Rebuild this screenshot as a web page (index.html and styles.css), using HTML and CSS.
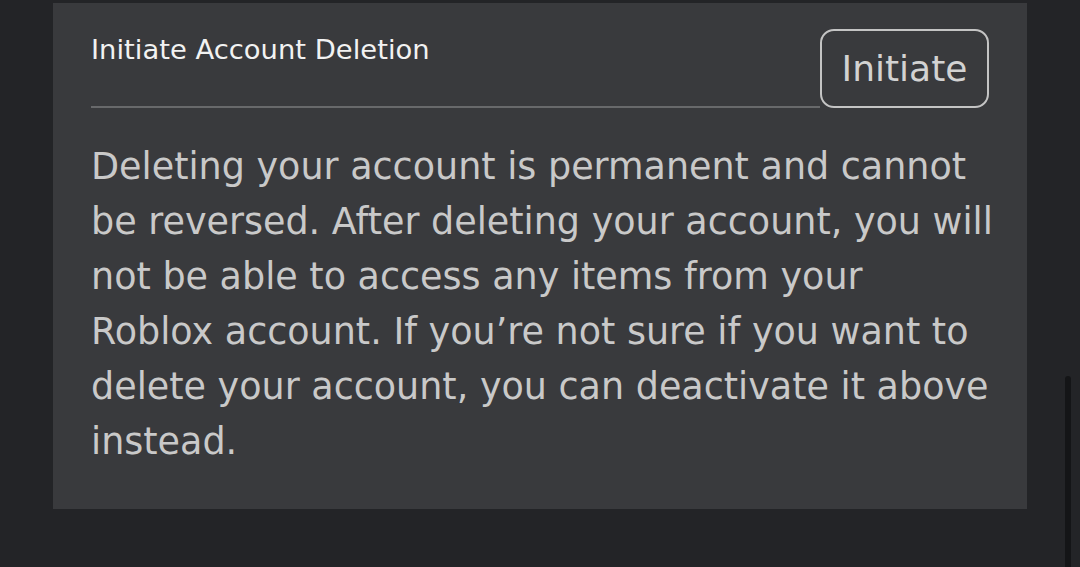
FILE: index.html
```html
<!DOCTYPE html>
<html lang="en">

<head>
    <meta charset="UTF-8">
    <meta name="viewport" content="width=device-width, initial-scale=1.0">
    <title>Account Settings</title>
    <link rel="stylesheet" href="styles.css">
</head>

<body>

    <div class="page">
        <section class="settings-panel">
            <div class="setting-row">
                <div class="setting-label">
                    <span>Initiate Account Deletion</span>
                </div>
                <button class="outline-btn" id="initiate">Initiate</button>
            </div>

            <p class="setting-desc">Deleting your account is permanent and cannot be reversed. After deleting your account, you will not be able to access any items from your Roblox account. If you’re not sure if you want to delete your account, you can deactivate it above instead.</p>
        </section>
    </div>

    <div class="scroll-thumb"></div>

</body>

</html>
```

FILE: styles.css
```css
body {
    margin: 0;
    background-color: #232427;
    font-family: "DejaVu Sans", "Open Sans", sans-serif;
    overflow: hidden;
}

.page {
    padding: 3px 0 0 53px;
}

.settings-panel {
    width: 974px;
    height: 506px;
    box-sizing: border-box;
    padding: 26px 38px 0 38px;
    background-color: #393a3d;
}

.setting-row {
    display: flex;
    align-items: stretch;
}

.setting-label {
    flex: 1;
    border-bottom: 2px solid #68696b;
    color: #f2f2f2;
    font-size: 27.4px;
    line-height: 30px;
    padding-top: 6px;
}

.outline-btn {
    width: 169px;
    height: 79px;
    box-sizing: border-box;
    background: transparent;
    border: 2px solid #c4c4c4;
    border-radius: 14px;
    color: #d2d2d2;
    font-family: inherit;
    font-size: 36px;
    padding: 0;
    cursor: pointer;
}

.setting-desc {
    margin: 31px -5px 0 0;
    color: #c9c9c9;
    font-size: 36.5px;
    line-height: 55px;
}

/* thin overlay scrollbar on the right edge */
.scroll-thumb {
    position: absolute;
    left: 1065px;
    top: 376px;
    width: 6px;
    height: 200px;
    border-radius: 3px;
    background-color: #141517;
}
```
